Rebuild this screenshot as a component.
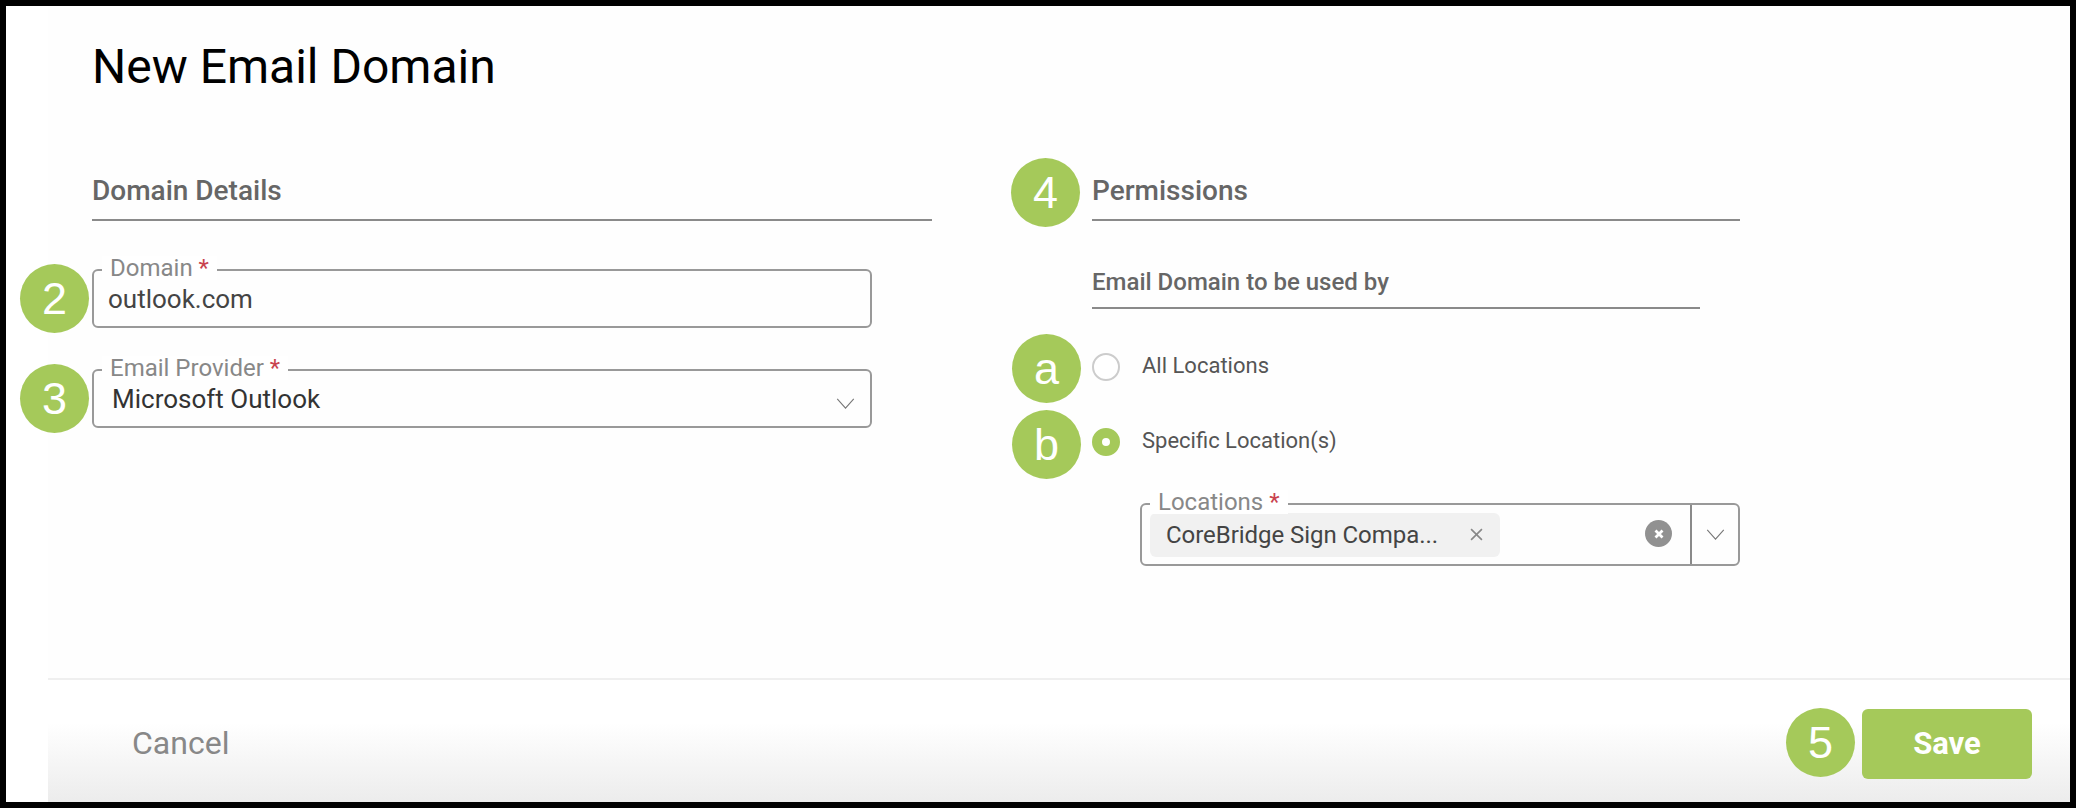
<script>
  let scope = 'specific';
</script>

<div class="frame">
  <div class="content">
    <h1>New Email Domain</h1>
    <div class="columns">
      <section class="left">
        <h2>Domain Details</h2>
        <div class="field">
          <span class="badge b2">2</span>
          <label class="float">Domain <em>*</em></label>
          <div class="value domain">outlook.com</div>
        </div>
        <div class="field provider">
          <span class="badge b3">3</span>
          <label class="float">Email Provider <em>*</em></label>
          <div class="value">Microsoft Outlook</div>
          <svg class="chev" viewBox="0 0 20 12"><path d="M1 1l9 10 9-10" /></svg>
        </div>
      </section>

      <section class="right">
        <h2><span class="badge b4">4</span>Permissions</h2>
        <div class="inner">
          <h3>Email Domain to be used by</h3>
          <div class="radio-row first">
            <span class="badge ba">a</span>
            <span class="radio" class:on={scope === 'all'}></span>
            <span class="radio-label">All Locations</span>
          </div>
          <div class="radio-row">
            <span class="badge bb">b</span>
            <span class="radio" class:on={scope === 'specific'}></span>
            <span class="radio-label">Specific Location(s)</span>
          </div>
          <div class="field multi">
            <label class="float">Locations <em>*</em></label>
            <div class="chip">
              <span>CoreBridge Sign Compa...</span>
              <svg class="chip-x" viewBox="0 0 12 12"><path d="M1 1l10 10M11 1L1 11" /></svg>
            </div>
            <span class="clear">
              <svg viewBox="0 0 10 10"><path d="M2.5 2.5l5 5M7.5 2.5l-5 5" /></svg>
            </span>
            <span class="toggle">
              <svg class="chev-static" viewBox="0 0 20 12"><path d="M1 1l9 10 9-10" /></svg>
            </span>
          </div>
        </div>
      </section>
    </div>
  </div>

  <footer>
    <button class="cancel">Cancel</button>
    <div class="save-wrap">
      <span class="badge b5">5</span>
      <button class="save">Save</button>
    </div>
  </footer>
</div>

<style>
  :global(body) {
    margin: 0;
    background: #000;
    font-family: Roboto, "Liberation Sans", sans-serif;
  }
  .frame {
    box-sizing: border-box;
    margin: 6px;
    width: 2064px;
    height: 796px;
    background: #fff;
    display: flex;
    flex-direction: column;
  }
  .content {
    flex: 1;
    margin-left: 42px;
    padding-left: 44px;
    background: #fefefe;
  }
  h1 {
    margin: 0;
    padding-top: 33px;
    font-size: 48px;
    line-height: 55px;
    font-weight: 400;
    color: #000;
  }
  .columns {
    display: flex;
    gap: 160px;
    margin-top: 67px;
  }
  .left {
    width: 840px;
  }
  .right {
    width: 648px;
  }
  h2 {
    position: relative;
    margin: 0;
    height: 60px;
    box-sizing: border-box;
    padding-top: 14px;
    font-size: 28px;
    line-height: 32px;
    font-weight: 500;
    color: #666;
    border-bottom: 2px solid #8a8a8a;
  }
  .field {
    position: relative;
    box-sizing: border-box;
    width: 780px;
    height: 59px;
    margin-top: 48px;
    border: 2px solid #999;
    border-radius: 6px;
    display: flex;
    align-items: center;
  }
  .provider {
    margin-top: 41px;
  }
  .float {
    position: absolute;
    left: 8px;
    top: -15px;
    padding: 0 8px;
    background: #fff;
    font-size: 24px;
    line-height: 24px;
    color: #888;
  }
  .float em {
    font-style: normal;
    color: #c9434e;
  }
  .value {
    padding-left: 18px;
    font-size: 26px;
    color: #333;
  }
  .domain {
    padding-left: 14px;
    color: #444;
  }
  .chev {
    position: absolute;
    right: 15px;
    top: 27px;
    width: 19px;
    height: 11px;
  }
  .chev path,
  .chev-static path {
    fill: none;
    stroke: #777;
    stroke-width: 1.2;
  }
  .inner {
    width: 608px;
  }
  h3 {
    margin: 0;
    height: 88px;
    box-sizing: border-box;
    padding-top: 47px;
    font-size: 24px;
    line-height: 28px;
    font-weight: 500;
    color: #666;
    border-bottom: 2px solid #8a8a8a;
  }
  .radio-row {
    position: relative;
    display: flex;
    align-items: center;
    gap: 22px;
    height: 28px;
    margin-top: 47px;
  }
  .radio-row.first {
    margin-top: 44px;
  }
  .radio {
    box-sizing: border-box;
    width: 28px;
    height: 28px;
    border-radius: 50%;
    border: 2px solid #ccc;
    background: #fff;
  }
  .radio.on {
    border: 10px solid #a5c95a;
    background: #fff;
  }
  .radio-label {
    padding-bottom: 4px;
    font-size: 22px;
    color: #555;
  }
  .multi {
    width: 600px;
    height: 63px;
    margin-top: 47px;
    margin-left: 48px;
  }
  .chip {
    box-sizing: border-box;
    width: 350px;
    height: 44px;
    margin-left: 8px;
    padding: 0 17px 0 16px;
    display: flex;
    align-items: center;
    justify-content: space-between;
    background: #f1f1f1;
    border-radius: 6px;
    font-size: 24px;
    letter-spacing: -0.05px;
    color: #444;
  }
  .chip-x {
    width: 13px;
    height: 13px;
  }
  .chip-x path {
    stroke: #888;
    stroke-width: 1.5;
    fill: none;
  }
  .clear {
    position: absolute;
    left: 503px;
    top: 15px;
    width: 27px;
    height: 27px;
    border-radius: 50%;
    background: #919191;
    display: flex;
    align-items: center;
    justify-content: center;
  }
  .clear svg {
    width: 14px;
    height: 14px;
  }
  .clear path {
    stroke: #fff;
    stroke-width: 2;
    fill: none;
  }
  .toggle {
    position: absolute;
    right: 0;
    top: 0;
    bottom: 0;
    width: 46px;
    border-left: 2px solid #8a8a8a;
    display: flex;
    align-items: center;
    justify-content: center;
  }
  .chev-static {
    width: 19px;
    height: 11px;
  }
  footer {
    height: 124px;
    margin-left: 42px;
    box-sizing: border-box;
    border-top: 2px solid #efefef;
    background: linear-gradient(to bottom, #fff 35%, #ececec 100%);
    display: flex;
    align-items: flex-start;
    justify-content: space-between;
    padding: 29px 38px 0 84px;
  }
  button {
    border: 0;
    font-family: inherit;
    background: none;
  }
  .cancel {
    height: 68px;
    padding: 0;
    font-size: 32px;
    color: #888;
  }
  .save-wrap {
    position: relative;
  }
  .save {
    display: block;
    width: 170px;
    height: 70px;
    padding: 0 0 2px;
    border-radius: 6px;
    background: #a5c95a;
    color: #fff;
    font-size: 31px;
    font-weight: 700;
  }
  .badge {
    position: absolute;
    display: flex;
    align-items: center;
    justify-content: center;
    width: 69px;
    height: 69px;
    border-radius: 50%;
    background: #a5c95a;
    color: #fff;
    font-family: "Liberation Sans", Arial, sans-serif;
    font-size: 45px;
    font-weight: 400;
    line-height: 1;
  }
  .b2 { left: -74px; top: -7px; }
  .b3 { left: -74px; top: -7px; }
  .b4 { left: -81px; top: -3px; }
  .ba { left: -80px; top: -19px; }
  .bb { left: -80px; top: -18px; }
  .b5 { left: -76px; top: -1px; }
</style>
